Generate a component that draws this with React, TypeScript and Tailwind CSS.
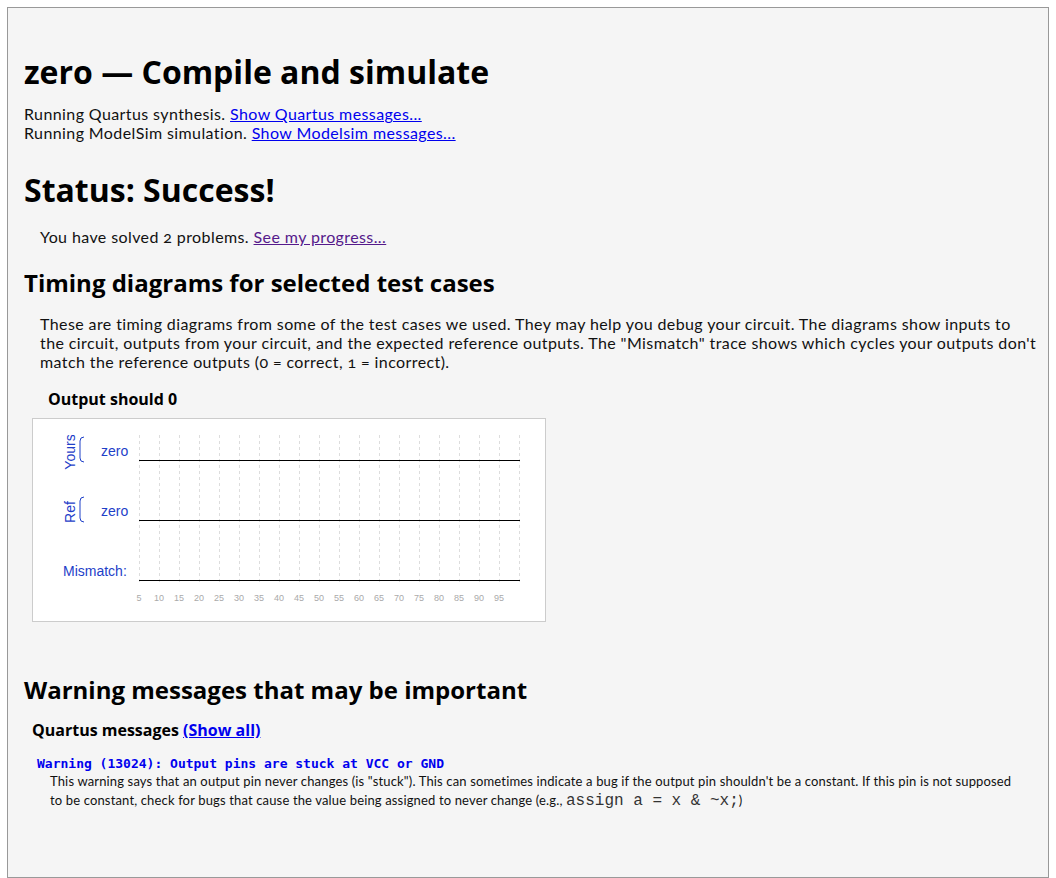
const ticks = Array.from({ length: 20 }, (_, i) => 106 + i * 20);

const TimingChart = () => (
  <div className="ml-2 mt-[9px] w-[514px] h-[204px] border border-[#ccc] bg-white">
    <svg width="512" height="202" className="block" style={{ fontFamily: '"Liberation Sans", Arial, sans-serif' }}>
      <defs>
        <clipPath id="lbl">
          <rect x={0} y={16} width={512} height={186} />
        </clipPath>
      </defs>
      {ticks.map((x) => (
        <line key={x} x1={x + 0.5} y1={16} x2={x + 0.5} y2={166} stroke="#ddd" strokeDasharray="3 3" />
      ))}
      <line x1={106} y1={41.5} x2={487} y2={41.5} stroke="#000" strokeWidth={1.2} />
      <line x1={106} y1={101.5} x2={487} y2={101.5} stroke="#000" strokeWidth={1.2} />
      <line x1={106} y1={161.5} x2={487} y2={161.5} stroke="#000" strokeWidth={1.2} />
      <g fill="#1e40c8" fontSize="14">
        <text x={68} y={37}>zero</text>
        <text x={68} y={97}>zero</text>
        <text x={30} y={157}>Mismatch:</text>
        <g clipPath="url(#lbl)">
          <text transform="translate(42 33) rotate(-90)" textAnchor="middle">Yours</text>
        </g>
        <text transform="translate(42 93) rotate(-90)" textAnchor="middle">Ref</text>
      </g>
      <path d="M51 18 Q47 18 47 22 L47 39 Q47 43 51 43" fill="none" stroke="#1e40c8" />
      <path d="M51 78 Q47 78 47 82 L47 99 Q47 103 51 103" fill="none" stroke="#1e40c8" />
      <g fill="#aaa" fontSize="9" textAnchor="middle">
        {ticks.slice(0, 19).map((x, i) => (
          <text key={x} x={x} y={182}>
            {(i + 1) * 5}
          </text>
        ))}
      </g>
    </svg>
  </div>
);

const App = () => {
  return (
    <div className="min-h-screen bg-white px-[7px] pt-[7px]">
      <div
        className="min-h-[871px] border border-[#999] bg-[#f5f5f5] pl-4 text-[#111] oldstyle-nums"
        style={{ fontFamily: '"Lato", "Open Sans", sans-serif' }}
      >
        <h1 className="mt-[44px] text-[32px] leading-[40px] font-bold font-['Open_Sans',sans-serif] text-black lining-nums">
          zero — Compile and simulate
        </h1>
        <div className="mt-3 text-base leading-[19px] tracking-[0.4px]">
          <div>
            Running Quartus synthesis.{" "}
            <a href="#" className="text-[#0000ee] underline">
              Show Quartus messages...
            </a>
          </div>
          <div>
            Running ModelSim simulation.{" "}
            <a href="#" className="text-[#0000ee] underline">
              Show Modelsim messages...
            </a>
          </div>
        </div>

        <h1 className="mt-[28px] text-[32px] leading-[40px] font-bold font-['Open_Sans',sans-serif] text-black">
          Status: Success!
        </h1>
        <p className="mt-[17px] ml-4 text-base leading-[19px] tracking-[0.4px]">
          You have solved 2 problems.{" "}
          <a href="#" className="text-[#551a8b] underline">
            See my progress...
          </a>
        </p>

        <h2 className="mt-[22px] text-2xl leading-[30px] font-bold font-['Open_Sans',sans-serif] text-black">
          Timing diagrams for selected test cases
        </h2>
        <p className="mt-4 ml-4 text-base leading-[19px] tracking-[0.4px]">
          These are timing diagrams from some of the test cases we used. They may help you debug your circuit. The
          diagrams show inputs to
          <br />
          the circuit, outputs from your circuit, and the expected reference outputs. The "Mismatch" trace shows which
          cycles your outputs don't
          <br />
          match the reference outputs (0 = correct, 1 = incorrect).
        </p>

        <div className="mt-[18px] ml-6 text-base leading-5 font-bold font-['Open_Sans',sans-serif] text-black lining-nums">
          Output should 0
        </div>
        <TimingChart />

        <h2 className="mt-[53px] text-2xl leading-[30px] font-bold font-['Open_Sans',sans-serif] text-black">
          Warning messages that may be important
        </h2>
        <div className="mt-[15px] ml-2 text-base leading-5 font-bold font-['Open_Sans',sans-serif] text-black">
          Quartus messages{" "}
          <a href="#" className="text-[#0000ee] underline">
            (Show all)
          </a>
        </div>
        <div className="mt-4 ml-[13px] text-[13px] leading-4 font-bold text-[#0000ee] font-['DejaVu_Sans_Mono',monospace] lining-nums">
          Warning (13024): Output pins are stuck at VCC or GND
        </div>
        <p className="ml-[26px] mr-6 text-[13px] leading-[19px] tracking-[0.15px]">
          This warning says that an output pin never changes (is "stuck"). This can sometimes indicate a bug if the
          output pin shouldn't be a constant. If this pin is not supposed to be constant, check for bugs that cause the
          value being assigned to never change (e.g.,{" "}
          <code className="text-base leading-none tracking-normal font-['Liberation_Mono',monospace] text-[#333]">
            assign a = x &amp; ~x;
          </code>
          )
        </p>
      </div>
    </div>
  );
};

export default App;
